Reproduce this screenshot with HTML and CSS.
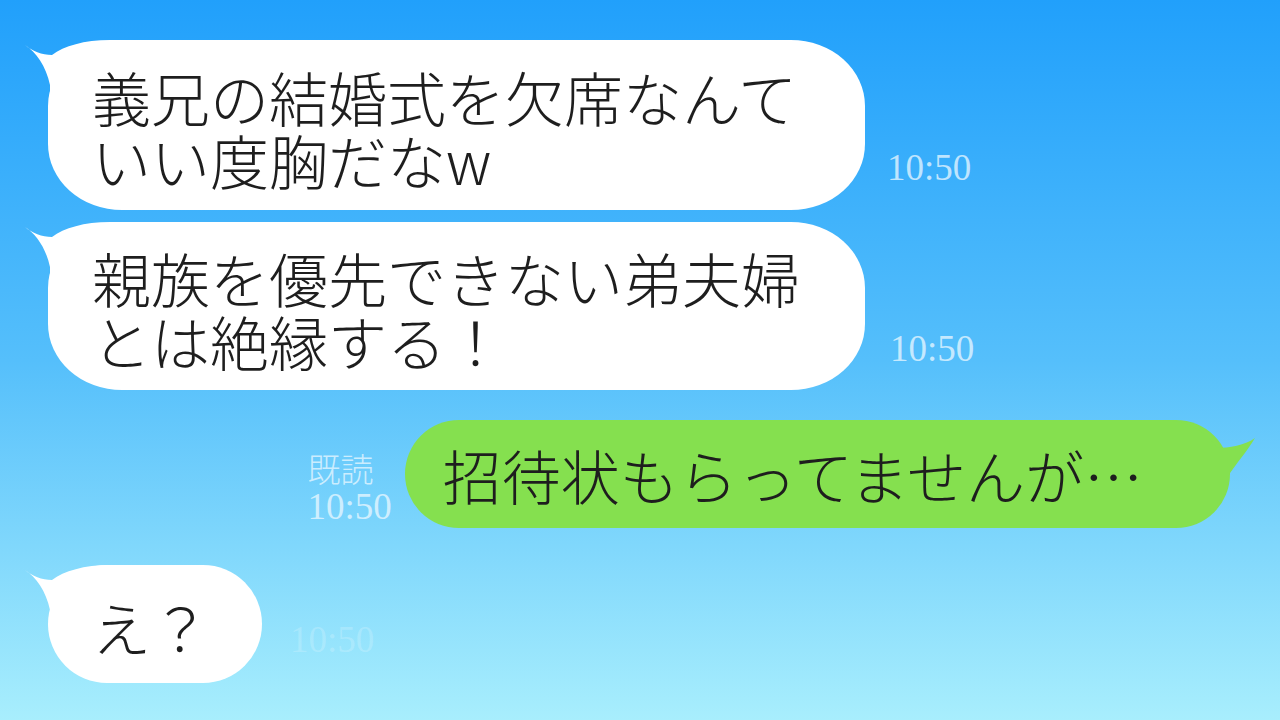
FILE: index.html
```html
<!DOCTYPE html>
<html lang="ja">

<head>
    <meta charset="UTF-8">
    <meta name="viewport" content="width=device-width, initial-scale=1.0">
    <title>トーク</title>
    <link rel="stylesheet" href="styles.css">
</head>

<body>
    <div class="chat">
        <!-- 相手のメッセージ -->
        <div class="row row-first">
            <div class="bubble white b1">
                <svg class="tail tail-left" width="110" height="60" viewBox="0 0 110 60">
                    <path d="M1 5 C8 11 18 15 28 15 C40 6 60 0 86 0 L110 0 L110 60 L26 60 L26 45 C22 26 12 12 1 5 Z" fill="#ffffff"/>
                </svg>
                <span class="text">義兄の結婚式を欠席なんて<br>いい度胸だなw</span>
            </div>
            <span class="time t1">10:50</span>
        </div>

        <div class="row row-second">
            <div class="bubble white b2">
                <svg class="tail tail-left" width="110" height="60" viewBox="0 0 110 60">
                    <path d="M1 5 C8 11 18 15 28 15 C40 6 60 0 86 0 L110 0 L110 60 L26 60 L26 45 C22 26 12 12 1 5 Z" fill="#ffffff"/>
                </svg>
                <span class="text">親族を優先できない弟夫婦<br>とは絶縁する！</span>
            </div>
            <span class="time t2">10:50</span>
        </div>

        <!-- 自分のメッセージ -->
        <div class="row row-mine">
            <div class="meta">
                <span class="read">既読</span>
                <span class="time">10:50</span>
            </div>
            <div class="bubble green b3">
                <svg class="tail tail-right" width="100" height="56" viewBox="0 0 100 56">
                    <path d="M99 18 C90 25 72 28 61 28 C50 10 30 0 0 0 L0 56 L72 56 C80 44 92 30 99 18 Z" fill="#85e04f"/>
                </svg>
                <span class="text">招待状もらってませんが…</span>
            </div>
        </div>

        <div class="row row-last">
            <div class="bubble white b4">
                <svg class="tail tail-left" width="110" height="60" viewBox="0 0 110 60">
                    <path d="M1 5 C8 11 18 15 28 15 C40 6 60 0 86 0 L110 0 L110 60 L26 60 L26 45 C22 26 12 12 1 5 Z" fill="#ffffff"/>
                </svg>
                <span class="text">え？</span>
            </div>
            <span class="time t4">10:50</span>
        </div>
    </div>
</body>

</html>
```

FILE: styles.css
```css
body {
    margin: 0;
    width: 1280px;
    height: 720px;
    overflow: hidden;
    background: linear-gradient(180deg, #21a0fb 0%, #55bffb 50%, #a8eefd 100%);
    font-family: "Noto Sans CJK JP", sans-serif;
    color: #1e1e1e;
}

.chat {
    display: flex;
    flex-direction: column;
    padding-top: 40px;
}

.row {
    display: flex;
    align-items: flex-end;
    padding-left: 48px;
}

.row-second {
    margin-top: 12px;
}

.row-mine {
    margin-top: 30px;
    justify-content: flex-end;
    padding-right: 50px;
}

.row-last {
    margin-top: 37px;
}

.bubble {
    position: relative;
    font-size: 59px;
    font-weight: 300;
    line-height: 63px;
    white-space: nowrap;
    border-radius: 74px / 66px;
}

.bubble .text {
    position: relative;
}

.bubble.white {
    background-color: #ffffff;
}

.bubble.green {
    background-color: #85e04f;
    border-radius: 54px;
}

.b1 {
    padding: 25px 68px 19px 44px;
}

.b2 {
    padding: 24px 65px 18px 44px;
}

.b3 {
    padding: 23px 87px 22px 38px;
}

.b4 {
    padding: 30px 52px 25px 44px;
    border-radius: 60px;
}

.tail {
    position: absolute;
    top: 0;
}

.tail-left {
    left: -24px;
}

.tail-right {
    right: -26px;
}

.time {
    font-family: "Liberation Serif", serif;
    font-size: 37px;
    line-height: 37px;
    color: rgba(235, 248, 255, 0.75);
}

.t1 {
    margin: 0 0 24px 22px;
}

.t2 {
    margin: 0 0 23px 25px;
}

.t4 {
    margin: 0 0 25px 28px;
    color: rgba(255, 255, 255, 0.2);
}

.meta {
    display: flex;
    flex-direction: column;
    margin: 0 13px 3px 0;
}

.meta .read {
    font-size: 33px;
    font-weight: 300;
    line-height: 40px;
    color: rgba(235, 248, 255, 0.75);
}
```
